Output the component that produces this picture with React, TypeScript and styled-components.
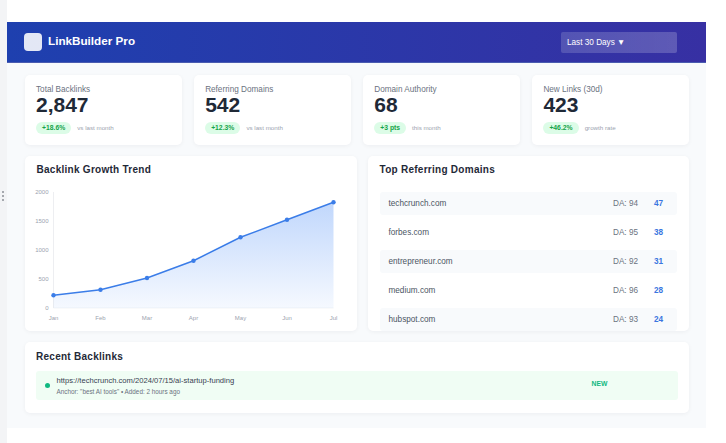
import React from 'react';
import styled, { createGlobalStyle } from 'styled-components';

const Global = createGlobalStyle`
  html, body { margin: 0; padding: 0; background: #fff; }
  body { font-family: "Liberation Sans", Arial, sans-serif; }
`;

const Shell = styled.div`
  display: flex;
  width: 726px;
  height: 443px;
  overflow: hidden;
  background: #fff;
`;
const Rail = styled.div`
  width: 7px;
  flex: none;
  background: #f3f4f6;
  display: flex;
  flex-direction: column;
  align-items: center;
  justify-content: center;
  gap: 2.3px;
  padding: 0 1px 51px 0;
  box-sizing: border-box;
`;
const RailDot = styled.span`
  width: 2px;
  height: 2px;
  border-radius: 50%;
  background: #8b8f96;
`;
const Page = styled.div`
  width: 699px;
  flex: none;
  padding-top: 22px;
`;
const Header = styled.header`
  height: 40.5px;
  box-sizing: border-box;
  padding: 0 29px 0 17px;
  display: flex;
  align-items: center;
  justify-content: space-between;
  background: linear-gradient(90deg, #1e40af 0%, #3730a3 100%);
  border-bottom: 1px solid #4a5cb0;
`;
const Brand = styled.div`
  display: flex;
  align-items: center;
  gap: 6px;
`;
const Logo = styled.div`
  width: 18px;
  height: 18px;
  border-radius: 4px;
  background: rgba(255, 255, 255, 0.88);
`;
const BrandName = styled.span`
  color: #fff;
  font-size: 11.7px;
  font-weight: 700;
  line-height: 16px;
  margin-top: -2px;
`;
const RangeButton = styled.div`
  width: 116px;
  height: 20.5px;
  margin-top: 1px;
  box-sizing: border-box;
  padding: 0 6px;
  display: flex;
  align-items: center;
  border-radius: 2px;
  background: linear-gradient(90deg, rgba(255,255,255,0.16), rgba(255,255,255,0.2));
  color: #fff;
  font-size: 8.2px;
`;
const Content = styled.main`
  height: 365.5px;
  box-sizing: border-box;
  padding: 12px 17px 0 17.5px;
  background: #f8fafc;
  display: flex;
  flex-direction: column;
  gap: 11px;
`;
const StatsRow = styled.section`
  display: grid;
  grid-template-columns: repeat(4, 1fr);
  gap: 12px;
`;
const Card = styled.div`
  background: #fff;
  border-radius: 5px;
  box-shadow: 0 1px 4px rgba(15, 23, 42, 0.05);
`;
const StatCard = styled(Card)`
  height: 70px;
  box-sizing: border-box;
  padding: 10px 11.5px 0;
`;
const StatLabel = styled.div`
  font-size: 8.2px;
  line-height: 9px;
  color: #6b7280;
`;
const StatValue = styled.div`
  font-size: 21px;
  font-weight: 700;
  line-height: 22px;
  color: #1f2937;
`;
const StatFoot = styled.div`
  display: flex;
  align-items: center;
  gap: 6px;
  margin-top: 6px;
`;
const Delta = styled.span`
  height: 12px;
  padding: 0 6px;
  display: flex;
  align-items: center;
  border-radius: 6px;
  background: #dcfce7;
  color: #16a34a;
  font-size: 6.8px;
  font-weight: 700;
`;
const Note = styled.span`
  font-size: 6.2px;
  color: #9ca3af;
`;
const PanelsRow = styled.section`
  display: grid;
  grid-template-columns: 332px 321.5px;
  gap: 11px;
`;
const Panel = styled(Card)`
  height: 175px;
  box-sizing: border-box;
  padding: 8px 12px 0;
  overflow: hidden;
`;
const PanelTitle = styled.h2`
  margin: 0;
  font-size: 10px;
  line-height: 12px;
  font-weight: 700;
  letter-spacing: 0.27px;
  color: #1f2937;
`;
const ChartSvg = styled.svg`
  display: block;
  width: 332px;
  height: 155px;
  margin: 0 -12px;
`;
const DomainList = styled.ul`
  list-style: none;
  margin: 16px 0 0;
  padding: 0;
  display: flex;
  flex-direction: column;
  gap: 6px;
`;
const DomainRow = styled.li<{ $shaded: boolean }>`
  height: 23.2px;
  box-sizing: border-box;
  padding: 0 14px 0 9px;
  display: flex;
  align-items: center;
  border-radius: 3px;
  background: ${p => (p.$shaded ? '#f8fafc' : 'transparent')};
  font-size: 8.2px;
  color: #4b5563;
`;
const DomainName = styled.span`
  flex: 1;
`;
const DomainDa = styled.span`
  width: 41px;
  color: #6b7280;
`;
const DomainCount = styled.span`
  width: 9px;
  color: #3b76e0;
  font-weight: 700;
`;
const RecentCard = styled(Card)`
  height: 71px;
  box-sizing: border-box;
  padding: 9px 11.5px 0;
`;
const BacklinkRow = styled.div`
  height: 28.5px;
  margin-top: 8.5px;
  box-sizing: border-box;
  padding: 0 0 0 9px;
  display: flex;
  align-items: center;
  background: #f0fdf4;
  border-radius: 3px;
`;
const StatusDot = styled.span`
  width: 5px;
  height: 5px;
  border-radius: 50%;
  background: #10b981;
  margin-right: 6.5px;
  flex: none;
`;
const BacklinkText = styled.div`
  flex: 1;
`;
const BacklinkUrl = styled.div`
  font-size: 7.6px;
  line-height: 11px;
  color: #374151;
`;
const BacklinkMeta = styled.div`
  font-size: 6.35px;
  line-height: 9px;
  margin-top: 1px;
  color: #6b7280;
`;
const NewTag = styled.span`
  width: 86px;
  font-size: 6.8px;
  font-weight: 700;
  color: #10b981;
  margin-top: -3px;
`;

const stats = [
  { label: 'Total Backlinks', value: '2,847', delta: '+18.6%', note: 'vs last month' },
  { label: 'Referring Domains', value: '542', delta: '+12.3%', note: 'vs last month' },
  { label: 'Domain Authority', value: '68', delta: '+3 pts', note: 'this month' },
  { label: 'New Links (30d)', value: '423', delta: '+46.2%', note: 'growth rate' },
];
const domains = [
  ['techcrunch.com', 'DA: 94', '47'],
  ['forbes.com', 'DA: 95', '38'],
  ['entrepreneur.com', 'DA: 92', '31'],
  ['medium.com', 'DA: 96', '28'],
  ['hubspot.com', 'DA: 93', '24'],
];
// Chart coordinates are relative to the panel's top-left, below the title row.
const ox = 24.5, oy = 176;
const pts: [number, number][] = [
  [53, 295.3], [100, 289.7], [146.5, 278], [193, 260.7], [240, 237.3], [286.5, 219.7], [333, 202.3],
].map(([x, y]) => [x - ox, y - oy] as [number, number]);
const line = pts.map(p => p.join(',')).join(' ');
const base = 308 - oy;
const ticks: [string, number][] = [['2000', 192], ['1500', 221], ['1000', 250], ['500', 279], ['0', 308]];
const months = ['Jan', 'Feb', 'Mar', 'Apr', 'May', 'Jun', 'Jul'];

export default function App() {
  return (
    <Shell>
      <Global />
      <Rail><RailDot /><RailDot /><RailDot /></Rail>
      <Page>
        <Header>
          <Brand><Logo /><BrandName>LinkBuilder Pro</BrandName></Brand>
          <RangeButton>Last 30 Days ▼</RangeButton>
        </Header>
        <Content>
          <StatsRow>
            {stats.map(s => (
              <StatCard key={s.label}>
                <StatLabel>{s.label}</StatLabel>
                <StatValue>{s.value}</StatValue>
                <StatFoot><Delta>{s.delta}</Delta><Note>{s.note}</Note></StatFoot>
              </StatCard>
            ))}
          </StatsRow>
          <PanelsRow>
            <Panel>
              <PanelTitle>Backlink Growth Trend</PanelTitle>
              <ChartSvg viewBox="0 0 332 155">
                <defs>
                  <linearGradient id="area" x1="0" y1="0" x2="0" y2="1">
                    <stop offset="0" stopColor="#3b82f6" stopOpacity="0.32" />
                    <stop offset="1" stopColor="#3b82f6" stopOpacity="0.05" />
                  </linearGradient>
                </defs>
                <line x1={28.5} y1={192 - oy} x2={28.5} y2={base} stroke="#e5e7eb" strokeWidth="0.7" />
                <line x1={28.5} y1={base} x2={308.5} y2={base} stroke="#eef0f3" strokeWidth="0.7" />
                <polygon points={`${pts[0][0]},${base} ${line} ${pts[6][0]},${base}`} fill="url(#area)" />
                <polyline points={line} fill="none" stroke="#3b7de8" strokeWidth="1.5" />
                {pts.map(([x, y]) => <circle key={x} cx={x} cy={y} r="2.2" fill="#3b7de8" />)}
                {ticks.map(([t, y]) => (
                  <text key={t} x={23.5} y={y - oy + 2} textAnchor="end" fontSize="6" fill="#9ca3af">{t}</text>
                ))}
                {months.map((m, i) => (
                  <text key={m} x={pts[i][0]} y={base + 11.5} textAnchor="middle" fontSize="6" fill="#9ca3af">{m}</text>
                ))}
              </ChartSvg>
            </Panel>
            <Panel>
              <PanelTitle>Top Referring Domains</PanelTitle>
              <DomainList>
                {domains.map(([n, d, c], i) => (
                  <DomainRow key={n} $shaded={i % 2 === 0}>
                    <DomainName>{n}</DomainName>
                    <DomainDa>{d}</DomainDa>
                    <DomainCount>{c}</DomainCount>
                  </DomainRow>
                ))}
              </DomainList>
            </Panel>
          </PanelsRow>
          <RecentCard>
            <PanelTitle>Recent Backlinks</PanelTitle>
            <BacklinkRow>
              <StatusDot />
              <BacklinkText>
                <BacklinkUrl>https://techcrunch.com/2024/07/15/ai-startup-funding</BacklinkUrl>
                <BacklinkMeta>Anchor: "best AI tools" • Added: 2 hours ago</BacklinkMeta>
              </BacklinkText>
              <NewTag>NEW</NewTag>
            </BacklinkRow>
          </RecentCard>
        </Content>
      </Page>
    </Shell>
  );
}
